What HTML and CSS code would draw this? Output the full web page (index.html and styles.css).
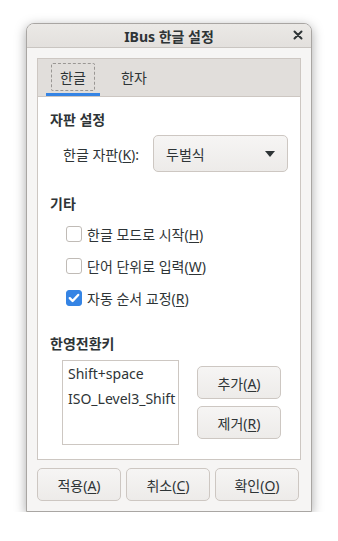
FILE: index.html
```html
<!DOCTYPE html>
<html lang="ko">
<head>
  <meta charset="UTF-8" />
  <meta name="viewport" content="width=device-width, initial-scale=1" />
  <title>IBus 한글 설정</title>
  <link rel="stylesheet" href="styles.css">
</head>
<body>

  <div class="window">
    <div class="titlebar">
      <span class="title">IBus 한글 설정</span>
      <span class="close">
        <svg width="10" height="10" viewBox="0 0 10 10"><path d="M1.5 1.5 L8.5 8.5 M8.5 1.5 L1.5 8.5" stroke="#2e3436" stroke-width="2" stroke-linecap="round"/></svg>
      </span>
    </div>

    <div class="content">
      <div class="notebook">
        <div class="tabs">
          <div class="tab active"><span class="focus">한글</span></div>
          <div class="tab"><span class="focus plain">한자</span></div>
        </div>

        <div class="page">
          <div class="heading">자판 설정</div>
          <div class="layout-row">
            <span class="label">한글 자판(<u>K</u>):</span>
            <div class="combo">
              <span>두벌식</span>
              <span class="arrow"></span>
            </div>
          </div>

          <div class="heading">기타</div>
          <div class="checks">
            <div class="check"><span class="box"></span>한글 모드로 시작(<u>H</u>)</div>
            <div class="check"><span class="box"></span>단어 단위로 입력(<u>W</u>)</div>
            <div class="check"><span class="box checked">
              <svg width="12" height="10" viewBox="0 0 12 10"><path d="M1.8 5.2 L4.6 8 L10.2 2" fill="none" stroke="#fff" stroke-width="2.4" stroke-linecap="round" stroke-linejoin="round"/></svg>
            </span>자동 순서 교정(<u>R</u>)</div>
          </div>

          <div class="heading">한영전환키</div>
          <div class="keys-row">
            <div class="keylist">
              <div>Shift+space</div>
              <div>ISO_Level3_Shift</div>
            </div>
            <div class="key-buttons">
              <button class="btn">추가(<u>A</u>)</button>
              <button class="btn">제거(<u>R</u>)</button>
            </div>
          </div>
        </div>
      </div>

      <div class="actions">
        <button class="btn">적용(<u>A</u>)</button>
        <button class="btn">취소(<u>C</u>)</button>
        <button class="btn">확인(<u>O</u>)</button>
      </div>
    </div>
  </div>

</body>
</html>
```

FILE: styles.css
```css
body {
  margin: 0;
  background: #ffffff;
  font-family: 'Noto Sans', 'Noto Sans CJK KR', sans-serif;
  font-size: 14px;
  color: #2e3436;
}

u {
  text-underline-offset: 2px;
}

.window {
  margin: 23px 0 0 26px;
  width: 284px;
  height: 487px;
  border: 1px solid #a9a6a3;
  border-radius: 8px 8px 0 0;
  background: #f6f5f4;
  box-shadow: 0 3px 12px rgba(0,0,0,0.35);
  display: flex;
  flex-direction: column;
}

.titlebar {
  position: relative;
  height: 23px;
  border-bottom: 1px solid #c9c5c1;
  border-radius: 7px 7px 0 0;
  background: linear-gradient(#ebe9e6, #e3e0dd);
  display: flex;
  align-items: center;
  justify-content: center;
}

.title {
  font-weight: bold;
  font-size: 14px;
}

.close {
  position: absolute;
  right: 8px;
  top: 6px;
  line-height: 0;
}

.content {
  padding: 10px 10px 0 10px;
}

.notebook {
  border: 1px solid #cdc7c2;
  height: 400px;
  display: flex;
  flex-direction: column;
}

.tabs {
  height: 37px;
  background: #e1dedb;
  border-bottom: 1px solid #cdc7c2;
  display: flex;
  padding-left: 8px;
  gap: 7px;
}

.tab {
  width: 54px;
  display: flex;
  align-items: center;
  justify-content: center;
  border-bottom: 3px solid transparent;
  padding-top: 2px;
}

.tab.active {
  border-bottom-color: #3584e4;
}

.focus {
  padding: 3px 8px;
  border: 1px dashed #9a9794;
  border-radius: 2px;
}

.focus.plain {
  border-color: transparent;
}

.page {
  flex: 1;
  background: #ffffff;
  padding: 9px 12px 0 12px;
}

.heading {
  font-weight: bold;
  line-height: 28px;
}

.layout-row {
  display: flex;
  align-items: center;
  padding-left: 13px;
  margin: 1px 0 18px 0;
  height: 37px;
}

.label {
  width: 90px;
}

.combo {
  width: 135px;
  height: 37px;
  border: 1px solid #cdc7c2;
  border-radius: 5px;
  background: linear-gradient(#f6f5f4, #edebe9);
  display: flex;
  align-items: center;
  justify-content: space-between;
  padding: 0 12px 0 12px;
  box-sizing: border-box;
}

.arrow {
  width: 0;
  height: 0;
  border-left: 5px solid transparent;
  border-right: 5px solid transparent;
  border-top: 6px solid #2e3436;
}

.checks {
  padding-left: 16px;
  margin: 0 0 16px 0;
}

.check {
  display: flex;
  align-items: center;
  height: 32px;
}

.box {
  width: 14px;
  height: 14px;
  border: 1px solid #c0bbb6;
  border-radius: 3px;
  background: #ffffff;
  margin-right: 5px;
  display: flex;
  align-items: center;
  justify-content: center;
}

.box.checked {
  background: #3584e4;
  border-color: #3584e4;
}

.keys-row {
  display: flex;
  padding-left: 12px;
  margin-top: 2px;
  gap: 18px;
}

.keylist {
  width: 117px;
  height: 85px;
  border: 1px solid #cdc7c2;
  padding: 0 5px;
  box-sizing: border-box;
  line-height: 25px;
}

.key-buttons {
  display: flex;
  flex-direction: column;
  gap: 7px;
  padding-top: 6px;
}

.btn {
  width: 84px;
  height: 33px;
  border: 1px solid #cdc7c2;
  border-radius: 5px;
  background: linear-gradient(#f6f5f4, #edebe9);
  font-family: inherit;
  font-size: 14px;
  color: #2e3436;
  padding: 0;
}

.actions {
  display: flex;
  gap: 5px;
  margin-top: 8px;
}
```
